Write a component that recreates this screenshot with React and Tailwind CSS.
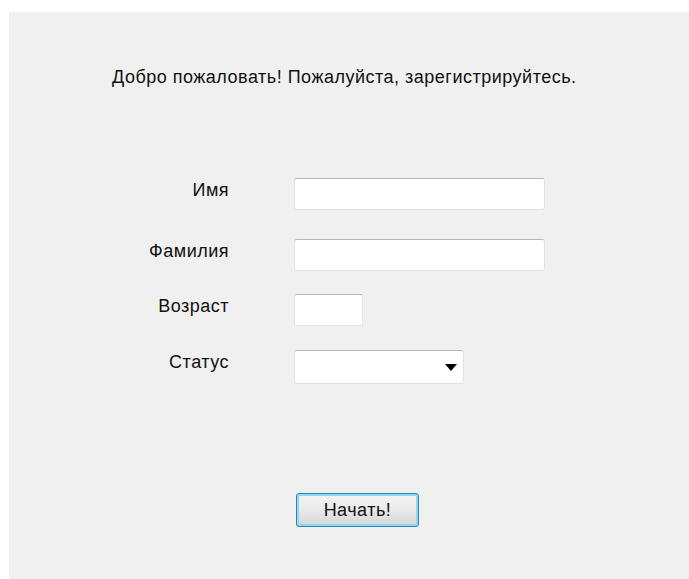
import React from "react";

// Text box with the classic sunken Windows look
function TextBox({ className = "" }) {
  return (
    <div
      className={`h-[32px] rounded-[3px] bg-white border border-[#dfe3e9] border-t-[#b4b7bd] ${className}`}
    />
  );
}

function ComboBox() {
  return (
    <div className="h-[34px] w-[170px] rounded-[3px] bg-white border border-[#dfe3e9] border-t-[#b4b7bd] flex items-center justify-end pr-[6px]">
      <svg width="12" height="7" viewBox="0 0 12 7">
        <polygon points="0,0 12,0 6,7" fill="#000" />
      </svg>
    </div>
  );
}

function Row({ label, children, className = "" }) {
  return (
    <div className={`flex items-start ${className}`}>
      <div className="w-[220px] pt-[2px] text-right">{label}</div>
      <div className="ml-[65px]">{children}</div>
    </div>
  );
}

export default function App() {
  return (
    <div className="min-h-screen bg-white pl-[9px] pt-[12px]">
      <div
        className="h-[567px] bg-[#f0f0f0] text-[#111] text-[18px] leading-[20px] tracking-[0.5px]"
        style={{ fontFamily: '"Liberation Sans", Arial, sans-serif' }}
      >
        <p className="pt-[55px] pl-[103px]">
          Добро пожаловать! Пожалуйста, зарегистрируйтесь.
        </p>

        <Row label="Имя" className="mt-[91px]">
          <TextBox className="w-[251px]" />
        </Row>
        <Row label="Фамилия" className="mt-[29px]">
          <TextBox className="w-[251px]" />
        </Row>
        <Row label="Возраст" className="mt-[23px]">
          <TextBox className="w-[69px]" />
        </Row>
        <Row label="Статус" className="mt-[24px]">
          <ComboBox />
        </Row>

        <div className="mt-[109px] pl-[287px]">
          <button className="h-[34px] w-[123px] rounded-[3px] border border-[#3c7fb1] shadow-[inset_0_0_0_2px_#8ad9f7] bg-gradient-to-b from-[#f4f4f4] via-[#e9e9e9] to-[#d6d6d6]">
            Начать!
          </button>
        </div>
      </div>
    </div>
  );
}
